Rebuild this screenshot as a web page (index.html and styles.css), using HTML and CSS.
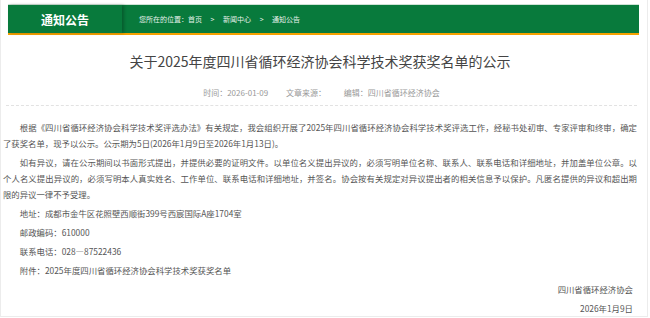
FILE: index.html
```html
<!DOCTYPE html>
<html lang="zh-CN">
<head>
    <meta charset="UTF-8">
    <meta name="viewport" content="width=device-width, initial-scale=1.0">
    <title>通知公告</title>
    <link rel="stylesheet" href="styles.css">
</head>
<body>
    <div class="page">
        <div class="bar">
            <div class="bar-title">通知公告</div>
            <div class="crumbs">
                您所在的位置：<a href="#">首页</a>
                <span class="sep">&gt;</span>
                <a href="#">新闻中心</a>
                <span class="sep">&gt;</span>
                <a href="#">通知公告</a>
            </div>
        </div>

        <div class="article">
            <h1>关于2025年度四川省循环经济协会科学技术奖获奖名单的公示</h1>
            <div class="meta">
                <span>时间：2026-01-09</span>
                <span>文章来源：</span>
                <span>编辑：四川省循环经济协会</span>
            </div>

            <div class="content">
                <p class="indent">根据《四川省循环经济协会科学技术奖评选办法》有关规定，我会组织开展了2025年四川省循环经济协会科学技术奖评选工作，经秘书处初审、专家评审和终审，确定了获奖名单，现予以公示。公示期为5日(2026年1月9日至2026年1月13日)。</p>
                <p class="indent">如有异议，请在公示期间以书面形式提出，并提供必要的证明文件。以单位名义提出异议的，必须写明单位名称、联系人、联系电话和详细地址，并加盖单位公章。以个人名义提出异议的，必须写明本人真实姓名、工作单位、联系电话和详细地址，并签名。协会按有关规定对异议提出者的相关信息予以保护。凡匿名提供的异议和超出期限的异议一律不予受理。</p>
                <p class="indent">地址：成都市金牛区花照壁西顺街399号西宸国际A座1704室</p>
                <p class="indent">邮政编码：610000</p>
                <p class="indent">联系电话：028—87522436</p>
                <p class="indent">附件：2025年度四川省循环经济协会科学技术奖获奖名单</p>
                <p class="sign">四川省循环经济协会</p>
                <p class="sign">2026年1月9日</p>
            </div>
        </div>
    </div>
</body>
</html>
```

FILE: styles.css
```css
body {
    margin: 0;
    font-family: "Noto Sans CJK SC", "Noto Sans", sans-serif;
    background-color: #fff;
}

.page {
    width: 646px;
    height: 316px;
    border: 1px solid #ececec;
    border-top: none;
    overflow: hidden;
}

/* green title bar */
.bar {
    display: flex;
    align-items: center;
    height: 28px;
    margin: 4px 8px 0 7px;
    background-color: #087a3c;
    border-top: 1px solid #cfe3d6;
    border-bottom: 2px solid #f5a100;
}

.bar-title {
    width: 114px;
    height: 100%;
    display: flex;
    justify-content: center;
    align-items: center;
    color: #fff;
    font-size: 12px;
    font-weight: bold;
    box-shadow: 2px 0 3px rgba(0, 0, 0, 0.25);
}

.crumbs {
    padding-left: 17px;
    color: #e6f1ea;
    font-size: 7px;
}

.crumbs a {
    color: #e6f1ea;
    text-decoration: none;
}

.crumbs .sep {
    margin: 0 7px;
}

/* article */
.article {
    padding: 0 10px 0 2px;
}

h1 {
    margin: 0;
    padding-top: 14px;
    text-align: center;
    font-size: 14px;
    font-weight: normal;
    line-height: 24px;
    color: #444;
}

.meta {
    margin: 14px 0 0 3px;
    padding-bottom: 6px;
    border-bottom: 1px dashed #e2e2e2;
    text-align: center;
    font-size: 8px;
    line-height: 12px;
    color: #999;
}

.meta span {
    margin: 0 8px;
}

.content {
    padding-top: 13px;
    font-size: 8.4px;
    line-height: 16px;
    color: #555;
}

.content p {
    margin: 0 0 3px;
    text-align: justify;
}

.content .indent {
    text-indent: 2em;
}

.content .sign {
    margin-top: 2px;
    padding-right: 4px;
    text-align: right;
}
```
